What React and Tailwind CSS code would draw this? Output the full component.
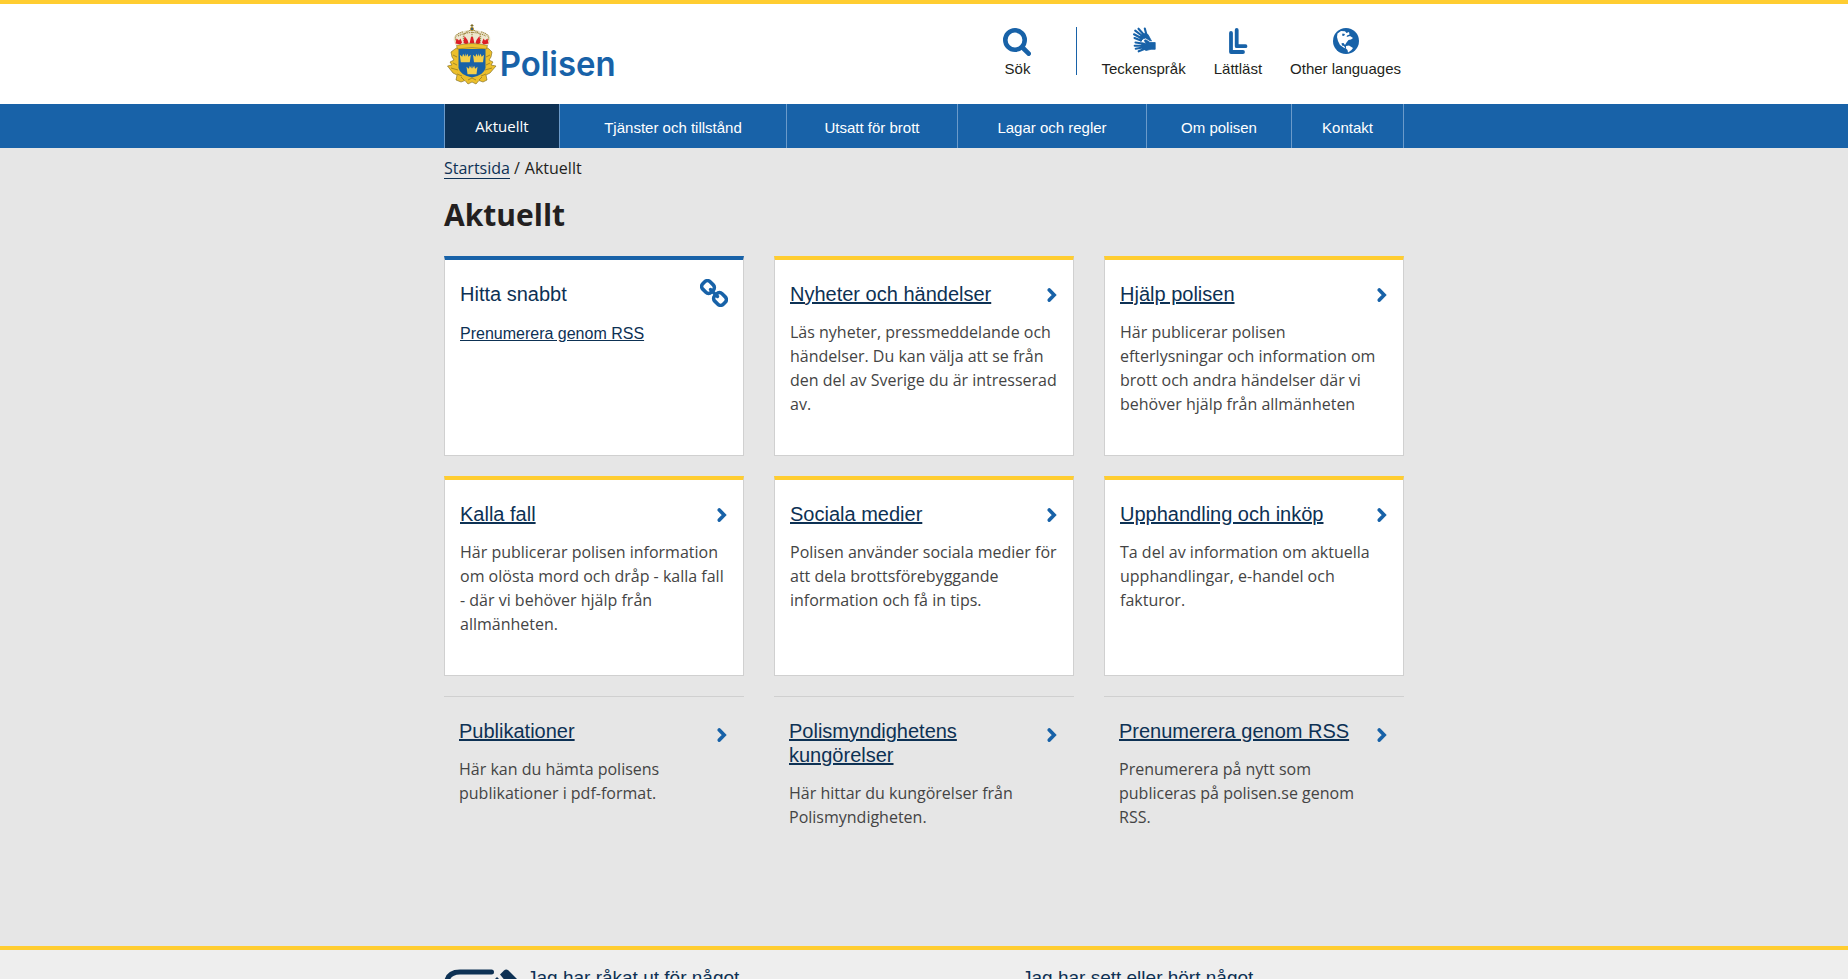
import React from "react";

function Crest() {
  const crown = (x, y) => (
    <g transform={`translate(${x} ${y})`} fill="#f4cf4a">
      <path d="M1 9 L0 1.500 L2.400 3.500 L3.300 0.500 L4.900 3.200 L5.500 0 L6.100 3.200 L7.700 0.500 L8.600 3.500 L11 1.500 L10 9 Z" />
    </g>
  );
  return (
    <svg width="50" height="64" viewBox="0 0 50 64" className="block shrink-0">
      <g fill="#ecbf2b" stroke="#77651f" strokeWidth="0.6">
        <path d="M8 26 L11 24 L39 24 L42 26 L45 29 L44 34 L42 37 L46 39 L44 42 L49 43 L43 50 L39 52 L40 57 L36 59 L32 57.500 L29 61 L25 59 L21 61 L18 57.500 L14 59 L9 57 L10 52 L6 50 L0.500 43 L5 42 L3 39 L7 37 L5 34 L4 29 Z" />
        <path d="M6 32 L10 34 M43 32 L39 34 M6 40 L10 42 M43 40 L39 42 M4 45 L11 47 M45 45 L38 47 M10 51 L15 53 M39 51 L34 53 M14 54 L17 57 M35 54 L32 57 M21 57 L25 55 L29 57" fill="none" />
      </g>
      <path d="M11.500 26 H38.500 V45 Q37 52 25 54.500 Q13 52 11.500 45 Z" fill="#1862a8" />
      {crown(12.8, 30.3)}
      {crown(26, 30.3)}
      {crown(19.5, 42.3)}
      <path d="M8 21 Q3.500 13 12 10 Q25 3.500 38 10 Q46.500 13 42 21 L39 24.500 H11 Z" fill="#eee7cf" />
      <path d="M10 19 Q5 12 16 8.800 M17 18 Q14 10 24 7 M33 18 Q36 10 26 7 M40 19 Q45 12 34 8.800 M25 7 V17 M11 13 Q25 6 39 13" fill="none" stroke="#9c8640" strokeWidth="1.100" strokeDasharray="1.200 0.700" />
      <path d="M8.500 20.500 l1 -5 2.500 2 1.500 -2 1.500 4 -1.500 2z M16.500 20 l1 -7 3 4 1 3 -2 1.500z M33.500 20 l-1 -7 -3 4 -1 3 2 1.500z M41.500 20.500 l-1 -5 -2.500 2 -1.500 -2 -1.500 4 1.500 2z M22.500 20.500 l1.500 -6.500 h2 l1.500 6.500z" fill="#dc1f26" />
      <path d="M9.500 22.500 Q25 18.500 40.500 22.500 L39.500 26 Q25 23 10.500 26 Z" fill="#efc22d" stroke="#77651f" strokeWidth="0.5" />
      <circle cx="25" cy="6" r="1.700" fill="#3d5b80" stroke="#c49b1c" strokeWidth="0.8" />
      <path d="M25 1 V4.500 M23.500 2.600 H26.500" fill="none" stroke="#77651f" strokeWidth="1" />
    </svg>
  );
}

function SearchIcon() {
  return (
    <svg width="28" height="28" viewBox="0 0 28 28" className="block" fill="none" stroke="#1862a8">
      <circle cx="12" cy="12" r="9.700" strokeWidth="4.600" />
      <path d="M19.500 19.500 L25.700 25.700" strokeWidth="4.600" strokeLinecap="round" />
    </svg>
  );
}

function HandsIcon() {
  return (
    <svg width="24" height="26" viewBox="0 0 24 26" className="block" fill="none" stroke="#1862a8" strokeLinecap="round" strokeLinejoin="round">
      <g strokeWidth="2.100">
        <path d="M2.500 11 L9 13.500 M2 7.300 L10 11.500 M3.200 3.600 L11 9.500 M6.500 1.700 L13 9 M12.800 1.500 L14.500 8" />
        <path d="M3.500 15.500 L12 16.700 M2.700 18.700 L12 18.700 M3.700 21.700 L12 20.300 M6.700 24.300 L13.500 21.500" />
      </g>
      <path d="M8 9.500 L12.500 6.500 L16 7.500 L19.500 14 L17.500 13.500 L13.800 11 L11 11.800 L9 14 Z" fill="#1862a8" strokeWidth="0.800" />
      <path d="M10 16 L14 17 L12.300 13.300 L14 12.800 L18 15.500 H23.200 V22.300 H19 L14 23.500 L10 21 Z" fill="#1862a8" strokeWidth="0.800" />
    </svg>
  );
}

function EasyReadIcon() {
  return (
    <svg width="20" height="27" viewBox="0 0 20 27" className="block" fill="none" stroke="#1862a8" strokeWidth="3.800" strokeLinecap="round" strokeLinejoin="round">
      <path d="M3 5 V24 H15" />
      <path d="M8.700 2 V18.200 H17.500" />
    </svg>
  );
}

function GlobeIcon() {
  return (
    <svg width="26" height="26" viewBox="0 0 26 26" className="block">
      <circle cx="13" cy="13" r="13" fill="#1862a8" />
      <g fill="#fff">
        <path d="M4.500 5.500 L8 3 L12 3.200 L13.500 5 L16 4 L16.500 6.500 L14 7.500 L13.700 9 L17 8 L20 10 L18 11.500 L15.500 12 L13.500 14.500 L12 17 L10.500 15 L8.500 15.300 L9 17.500 L11 18 L12.500 20.500 L10.500 19.600 L7 17 L5 13 L4 9 Z" />
        <path d="M13 18 L16 17.500 L20 20 L18.500 22 L16.500 23.500 L15 24.500 L14.500 22 L13 20.500 Z" />
      </g>
      <path d="M9.500 5.500 L12 6 L11 8 L9 7.500 Z" fill="#1862a8" />
    </svg>
  );
}

function LinkIcon() {
  return (
    <svg width="28" height="28" viewBox="0 0 28 28" className="block shrink-0" fill="none" stroke="#1862a8" strokeWidth="3.600" strokeLinecap="round" strokeLinejoin="round">
      <rect x="-6" y="-5.200" width="12" height="10.400" rx="3.800" transform="translate(8 8) rotate(45)" />
      <rect x="-6" y="-5.200" width="12" height="10.400" rx="3.800" transform="translate(20 20) rotate(45)" />
      <path d="M10.500 10.500 L17.500 17.500" strokeWidth="3.400" />
    </svg>
  );
}

function Chevron() {
  return (
    <svg width="11" height="15" viewBox="0 0 11 15" className="block shrink-0" fill="none" stroke="#1862a8" strokeWidth="3.600" strokeLinecap="round">
      <path d="M2.300 2.900 L7.200 8 L2.300 13.100" strokeLinejoin="miter" />
    </svg>
  );
}

function Tool({ label, className, children }) {
  return (
    <a className={"flex flex-col items-center " + className}>
      <span className="flex h-[29px] items-start">{children}</span>
      <span className="whitespace-nowrap text-[15px] leading-6 text-[#231f20]">{label}</span>
    </a>
  );
}

const nav = [
  ["Tjänster och tillstånd", "w-[227px]"],
  ["Utsatt för brott", "w-[171px]"],
  ["Lagar och regler", "w-[189px]"],
  ["Om polisen", "w-[145px]"],
  ["Kontakt", "w-[112px]"],
];

const cards = [
  ["Nyheter och händelser", "Läs nyheter, pressmeddelande och händelser. Du kan välja att se från den del av Sverige du är intresserad av."],
  ["Hjälp polisen", "Här publicerar polisen efterlysningar och information om brott och andra händelser där vi behöver hjälp från allmänheten"],
  ["Kalla fall", "Här publicerar polisen information om olösta mord och dråp - kalla fall - där vi behöver hjälp från allmänheten."],
  ["Sociala medier", "Polisen använder sociala medier för att dela brottsförebyggande information och få in tips."],
  ["Upphandling och inköp", "Ta del av information om aktuella upphandlingar, e-handel och fakturor."],
];

const plain = [
  ["Publikationer", "Här kan du hämta polisens publikationer i pdf-format."],
  ["Polismyndighetens kungörelser", "Här hittar du kungörelser från Polismyndigheten."],
  ["Prenumerera genom RSS", "Prenumerera på nytt som publiceras på polisen.se genom RSS."],
];

export default function App() {
  return (
    <div className="h-[979px] overflow-hidden bg-[#e6e6e6] font-['Liberation_Sans',sans-serif] text-[#231f20]">
      <header className="h-[104px] border-t-4 border-[#ffcd31] bg-white">
        <div className="mx-auto flex w-[960px] justify-between">
          <div className="flex pt-[19px] pl-[3px]">
            <Crest />
            <svg width="124" height="70" viewBox="0 0 124 70" className="block">
              <text x="2.700" y="53.300" textLength="116" lengthAdjust="spacingAndGlyphs" fill="#1862a8" className="font-['Inter',sans-serif] text-[34px] font-semibold">Polisen</text>
            </svg>
          </div>
          <div className="flex pt-[23px] pr-[3px]">
            <Tool label="Sök" className="mt-px mr-[45px]"><SearchIcon /></Tool>
            <div className="h-12 w-px bg-[#1862a8]" />
            <Tool label="Teckenspråk" className="mt-px ml-6"><span className="-mt-px block"><HandsIcon /></span></Tool>
            <Tool label="Lättläst" className="mt-px ml-7"><EasyReadIcon /></Tool>
            <Tool label="Other languages" className="mt-px ml-7"><GlobeIcon /></Tool>
          </div>
        </div>
      </header>
      <nav className="h-11 bg-[#1862a8]">
        <div className="mx-auto flex h-11 w-[960px] border-l border-[#6a9aca] text-[15px] leading-[46px] text-white">
          <a className="w-[115px] border-r border-[#6a9aca] bg-[#0d3154] text-center font-['Open_Sans',sans-serif] leading-[45px]">Aktuellt</a>
          {nav.map(([t, w]) => (
            <a key={t} className={"h-11 border-r border-[#6a9aca] pt-px text-center " + w}>{t}</a>
          ))}
        </div>
      </nav>
      <main className="mx-auto h-[798px] w-[960px]">
        <div className="flex h-[31px] pt-2 font-['Open_Sans',sans-serif] text-base leading-[25px]">
          <a className="h-[23px] border-b border-[#0d3154] text-[#0d3154]">Startsida</a>
          <span className="ml-1">/</span>
          <span className="ml-[5px]">Aktuellt</span>
        </div>
        <h1 className="pt-4 pb-px font-['Open_Sans',sans-serif] text-[30px] leading-10 font-bold">Aktuellt</h1>
        <div className="mt-5 grid grid-cols-3 gap-x-[30px] gap-y-5">
          <section className="h-[200px] border border-t-4 border-[#d0d0d0] border-t-[#1862a8] bg-white px-[15px]">
            <div className="flex justify-between pt-[19px]">
              <h2 className="pt-[3px] text-[20px] leading-6 text-[#0d3154]">Hitta snabbt</h2>
              <LinkIcon />
            </div>
            <a className="mt-[15px] block text-base leading-6 text-[#0d3154] underline">Prenumerera genom RSS</a>
          </section>
          {cards.map(([t, d]) => (
            <section key={t} className="h-[200px] border border-t-4 border-[#d0d0d0] border-t-[#ffcd31] bg-white px-[15px] pt-[22px]">
              <div className="flex items-center justify-between">
                <h2 className="text-[20px] leading-6 text-[#0d3154] underline">{t}</h2>
                <Chevron />
              </div>
              <p className="mt-[14px] font-['Open_Sans',sans-serif] text-base leading-6 text-[#444]">{d}</p>
            </section>
          ))}
          {plain.map(([t, d]) => (
            <section key={t} className="border-t border-[#d0d0d0] px-[15px] pt-[22px]">
              <div className="flex justify-between pr-px">
                <h2 className="w-[240px] text-[20px] leading-6 text-[#0d3154] underline">{t}</h2>
                <div className="pt-2"><Chevron /></div>
              </div>
              <p className="mt-[14px] w-[240px] font-['Open_Sans',sans-serif] text-base leading-6 text-[#444]">{d}</p>
            </section>
          ))}
        </div>
      </main>
      <footer className="h-[33px] overflow-hidden border-t-4 border-[#ffcd31] bg-[#eee]">
        <div className="mx-auto flex w-[960px] pt-[15px] text-[19px] leading-[26px] text-[#0d3154]">
          <div className="flex w-[578px]">
            <svg width="83" height="48" viewBox="0 0 83 48" className="mt-1 block" fill="none">
              <path d="M47.500 2.900 H16 Q2.500 2.900 2.500 16 V40" stroke="#0d3154" strokeWidth="5" strokeLinecap="round" />
              <path d="M56 5.500 L60 1.500 Q62 -0.500 64.500 1.500 L76 13 L68 20 Z" fill="#0d3154" />
              <path d="M53 8 L63 18 L56 25 L46 15 Z" fill="#0d3154" />
            </svg>
            <span>Jag har råkat ut för något</span>
          </div>
          <span>Jag har sett eller hört något</span>
        </div>
      </footer>
    </div>
  );
}
